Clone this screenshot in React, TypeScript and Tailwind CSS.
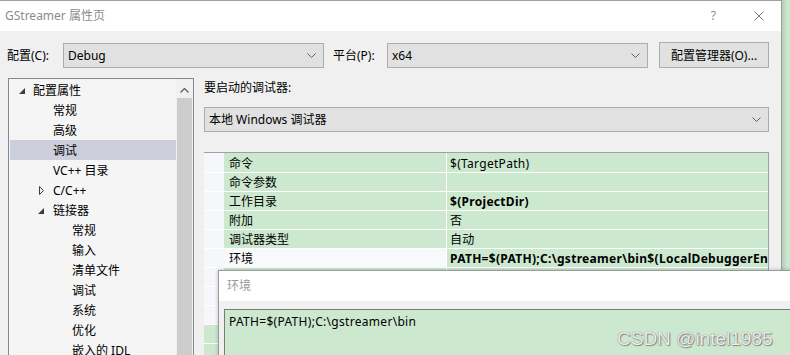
import React from 'react';

function Chevron() {
  return (
    <svg width="9" height="5" viewBox="0 0 9 5" className="shrink-0">
      <polyline points="0.5,0.5 4.5,4.5 8.5,0.5" fill="none" stroke="#606060" strokeWidth="1" />
    </svg>
  );
}

function Select({ text, className }: { text: string; className: string }) {
  return (
    <div className={`h-[25px] flex items-center border border-[#adadad] bg-[#e1e1e1] pl-[4px] pr-[7px] ${className}`}>
      <span className="flex-1 whitespace-nowrap pt-px">{text}</span>
      <Chevron />
    </div>
  );
}

type TreeItem = { t: string; pad: string; arrow?: 'open' | 'closed'; slot?: string; sel?: boolean };

const tree: TreeItem[] = [
  { t: '配置属性', pad: 'pl-[9px]', arrow: 'open', slot: 'w-[14px]' },
  { t: '常规', pad: 'pl-[43px]' },
  { t: '高级', pad: 'pl-[43px]' },
  { t: '调试', pad: 'pl-[43px]', sel: true },
  { t: 'VC++ 目录', pad: 'pl-[43px]' },
  { t: 'C/C++', pad: 'pl-[28px]', arrow: 'closed', slot: 'w-[15px]' },
  { t: '链接器', pad: 'pl-[28px]', arrow: 'open', slot: 'w-[15px]' },
  { t: '常规', pad: 'pl-[62px]' },
  { t: '输入', pad: 'pl-[62px]' },
  { t: '清单文件', pad: 'pl-[62px]' },
  { t: '调试', pad: 'pl-[62px]' },
  { t: '系统', pad: 'pl-[62px]' },
  { t: '优化', pad: 'pl-[62px]' },
  { t: '嵌入的 IDL', pad: 'pl-[62px]' },
];

type GridRow = { n: string; v: string; b?: boolean; light?: boolean; gg?: boolean };

const gridRows: GridRow[] = [
  { n: '命令', v: '$(TargetPath)' },
  { n: '命令参数', v: '' },
  { n: '工作目录', v: '$(ProjectDir)', b: true },
  { n: '附加', v: '否' },
  { n: '调试器类型', v: '自动' },
  { n: '环境', v: 'PATH=$(PATH);C:\\gstreamer\\bin$(LocalDebuggerEnvironment)', b: true, light: true },
  { n: '合并环境', v: '是' },
  { n: 'SQL 调试', v: '否' },
  { n: '调试加速器类型', v: '' },
  { n: '', v: '', gg: true },
  { n: '', v: '', gg: true },
];

export default function App() {
  return (
    <div className="relative w-[790px] h-[355px] overflow-hidden flex bg-[#cce8cf] font-['Noto_Sans','Noto_Sans_CJK_SC',sans-serif] text-[12px] leading-[16px] text-black">
      <div className="w-[782px] h-full flex flex-col border-t border-r border-[#a0a0a0] bg-[#f0f0f0]">
        {/* title bar */}
        <div className="h-[30px] shrink-0 bg-white flex items-center pl-[5px] pr-[17px]">
          <span className="flex-1 text-[#8c8c8c]">GStreamer 属性页</span>
          <span className="text-[#8c8c8c] mr-[38px]">?</span>
          <svg width="10" height="10" viewBox="0 0 10 10">
            <line x1="0.5" y1="0.5" x2="9.5" y2="9.5" stroke="#777" strokeWidth="1" />
            <line x1="9.5" y1="0.5" x2="0.5" y2="9.5" stroke="#777" strokeWidth="1" />
          </svg>
        </div>

        {/* config row */}
        <div className="mt-[11px] h-[26px] shrink-0 flex items-center pl-[7px]">
          <span className="w-[56px] whitespace-nowrap pt-px">配置(C):</span>
          <Select text="Debug" className="w-[261px]" />
          <span className="ml-[9px] w-[54px] whitespace-nowrap pt-px">平台(P):</span>
          <Select text="x64" className="w-[261px]" />
          <div className="ml-[11px] w-[110px] h-[26px] border border-[#adadad] bg-[#e1e1e1] flex items-center justify-center whitespace-nowrap pt-px">
            配置管理器(O)...
          </div>
        </div>

        {/* content */}
        <div className="mt-[10px] flex flex-1 min-h-0 pl-[8px]">
          {/* tree */}
          <div className="w-[186px] border-t border-l border-r border-[#828790] bg-[#f5f5f5] flex">
            <div className="flex-1 flex flex-col pl-px pt-px">
              {tree.map((it, i) => (
                <div
                  key={i}
                  className={`h-[20px] shrink-0 flex items-center whitespace-nowrap ${it.pad} ${it.sel ? 'bg-[#cccedb]' : ''}`}
                >
                  {it.arrow && (
                    <span className={`${it.slot} h-[20px] flex items-center`}>
                      {it.arrow === 'open' ? (
                        <svg width="6" height="6" viewBox="0 0 6 6" className="mt-[2px]">
                          <polygon points="6,0 6,6 0,6" fill="#3c3c3c" />
                        </svg>
                      ) : (
                        <svg width="5" height="9" viewBox="0 0 5 9" className="ml-[1px] mt-[1px]">
                          <polygon points="0.5,0.5 4.5,4.5 0.5,8.5" fill="none" stroke="#3c3c3c" strokeWidth="1" />
                        </svg>
                      )}
                    </span>
                  )}
                  <span className="pt-px">{it.t}</span>
                </div>
              ))}
            </div>
            <div className="w-[17px] flex flex-col bg-[#f0f0f0]">
              <div className="h-[19px] flex items-center justify-center pt-[3px]">
                <svg width="9" height="5" viewBox="0 0 9 5">
                  <polyline points="0.5,4.5 4.5,0.5 8.5,4.5" fill="none" stroke="#606060" strokeWidth="1.3" />
                </svg>
              </div>
              <div className="flex-1 mx-[1px] bg-[#cdcdcd]" />
            </div>
          </div>

          {/* right pane */}
          <div className="ml-[10px] w-[565px] flex flex-col">
            <div className="h-[20px] flex items-center whitespace-nowrap">要启动的调试器:</div>
            <Select text="本地 Windows 调试器" className="mt-[9px] w-[565px] pl-[3px]" />
            <div className="mt-[20px] flex-1 flex flex-col border-t border-r border-[#a0a0a0] overflow-hidden">
              {gridRows.map((r, i) => (
                <div key={i} className={`flex shrink-0 border-b border-white ${i === 0 ? 'h-[20px]' : 'h-[19px]'}`}>
                  <div className={`w-[20px] ${r.gg ? 'bg-[#cce8cf]' : 'bg-[#f5f7fb]'}`} />
                  <div
                    className={`w-[223px] border-r border-white pl-[5px] pt-[2px] flex items-center whitespace-nowrap ${r.light ? 'bg-[#f7f9fc]' : 'bg-[#cce8cf]'}`}
                  >
                    {r.n}
                  </div>
                  <div
                    className={`flex-1 min-w-0 overflow-hidden pl-[3px] pt-[2px] flex items-center whitespace-nowrap tracking-[0.3px] bg-[#cce8cf] ${r.b ? 'font-bold' : ''}`}
                  >
                    {r.v}
                  </div>
                </div>
              ))}
            </div>
          </div>
        </div>
      </div>

      {/* right strip behind dialog */}
      <div className="flex-1 bg-[linear-gradient(to_right,#b3cbb6,#cce8cf_5px)]" />

      {/* environment dialog */}
      <div className="absolute left-[218px] top-[270px] w-[600px] h-[90px] border-l border-t border-[#9a9a9a] bg-white flex flex-col shadow-[-1px_-1px_3px_rgba(0,0,0,0.15)]">
        <div className="h-[30px] shrink-0 flex items-center pl-[8px] text-[#999]">环境</div>
        <div className="flex-1 bg-[#f0f0f0] pt-[8px] pl-[5px]">
          <div className="h-full border-l border-t border-[#7a7a7a] bg-[#cce8cf] pl-[4px] pt-[4px] whitespace-nowrap tracking-[0.3px]">
            PATH=$(PATH);C:\gstreamer\bin
          </div>
        </div>
      </div>

      {/* watermark */}
      <div className="absolute left-[617px] top-[328px] font-['Liberation_Sans',Arial,sans-serif] text-[19px] leading-[22px] text-[#ececec] whitespace-nowrap [text-shadow:0_0_1px_#6a6a6a,1px_1px_1px_#8a8a8a]">
        CSDN @intel1985
      </div>
    </div>
  );
}
